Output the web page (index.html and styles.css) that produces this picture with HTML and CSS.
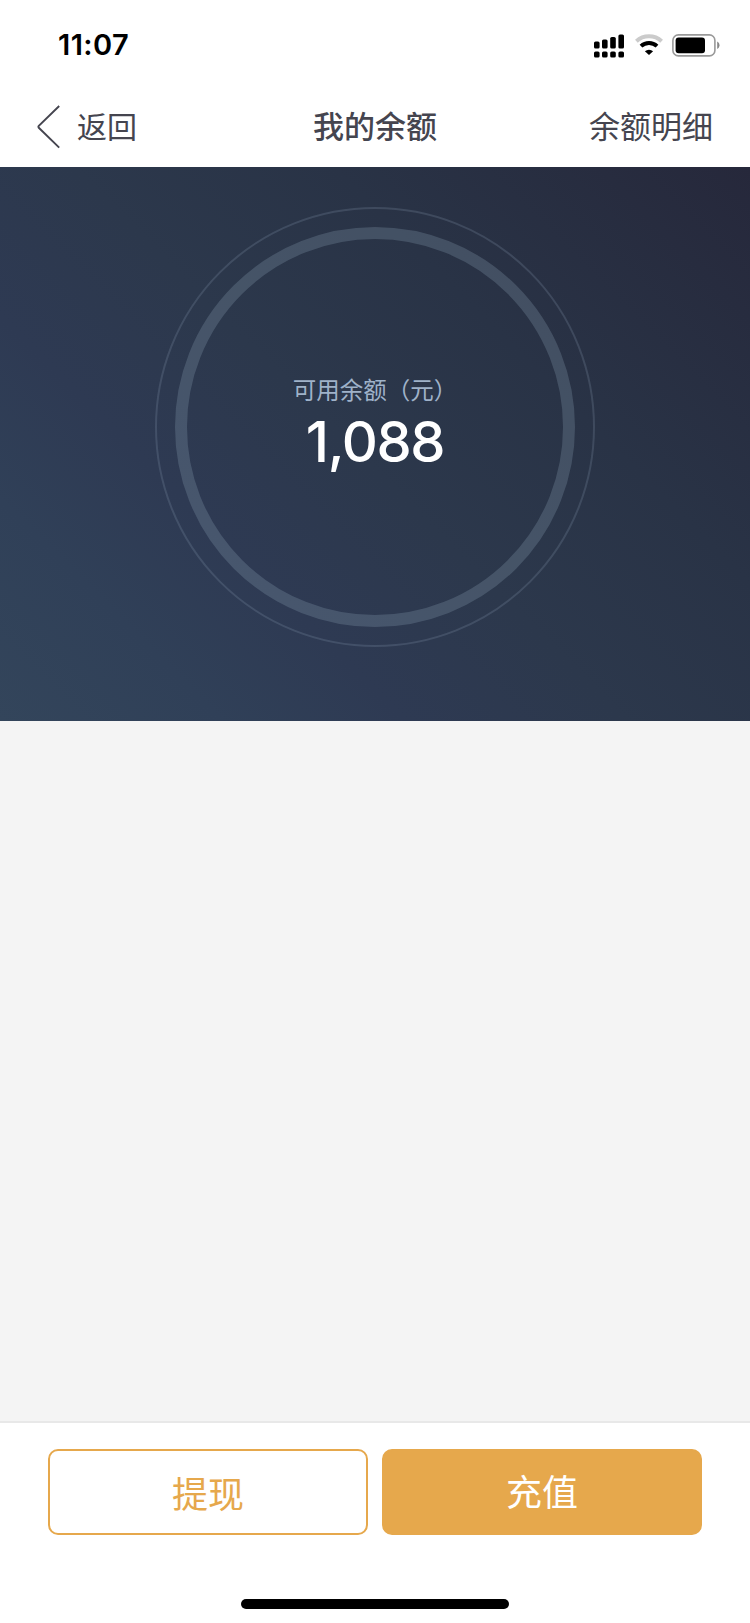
FILE: index.html
```html
<!DOCTYPE html>
<html lang="zh-CN">
<head>
  <meta charset="UTF-8" />
  <meta name="viewport" content="width=device-width, initial-scale=1.0" />
  <title>我的余额</title>
  <link rel="stylesheet" href="styles.css">
</head>
<body>
  <div class="status-bar">
    <span class="time">11:07</span>
    <div class="status-icons">
      <svg class="signal" width="30" height="24" viewBox="0 0 30 24">
        <rect x="0" y="7.5" width="5.6" height="7" rx="1.6" />
        <rect x="8" y="5.5" width="5.6" height="9" rx="1.6" />
        <rect x="16.2" y="3" width="5.6" height="11.5" rx="1.6" />
        <rect x="24.4" y="0.5" width="5.6" height="14" rx="1.6" />
        <rect x="0" y="17.5" width="5.6" height="6" rx="1.6" />
        <rect x="8" y="17.5" width="5.6" height="6" rx="1.6" />
        <rect x="16.2" y="17.5" width="5.6" height="6" rx="1.6" />
        <rect x="24.4" y="17.5" width="5.6" height="6" rx="1.6" />
      </svg>
      <svg class="wifi" width="28" height="22" viewBox="0 0 28 22">
        <path d="M1.4 7.3 A18.5 18.5 0 0 1 26.6 7.3" fill="none" stroke="#cbcbcb" stroke-width="4" />
        <path d="M6 12.1 A11.8 11.8 0 0 1 22 12.1" fill="none" stroke="#000" stroke-width="4" />
        <path d="M14 21 L9.9 17.2 A6.2 6.2 0 0 1 18.1 17.2 Z" />
      </svg>
      <svg class="battery" width="48" height="23" viewBox="0 0 48 23">
        <rect x="0.9" y="0.9" width="42" height="21" rx="5.5" fill="none" stroke="#999" stroke-width="1.6" />
        <rect x="3.6" y="3.5" width="29.4" height="15.8" rx="3" />
        <path d="M45.2 7.5 C48.2 9 48.2 13.5 45.2 15 Z" fill="#888" />
      </svg>
    </div>
  </div>

  <header class="nav">
    <a class="back">
      <svg width="24" height="44" viewBox="0 0 24 44">
        <path d="M22.2 1 L1.8 20.8 Q1 21.8 1.8 22.8 L22.2 42.6" fill="none" stroke="#45454f" stroke-width="1.9" />
      </svg>
      <span>返回</span>
    </a>
    <h1 class="title">我的余额</h1>
    <a class="detail">余额明细</a>
  </header>

  <section class="balance">
    <div class="ring-outer">
      <div class="ring">
        <p class="label">可用余额（元）</p>
        <p class="amount">1,088</p>
      </div>
    </div>
  </section>

  <main class="content"></main>

  <footer class="footer">
    <div class="buttons">
      <button class="btn withdraw">提现</button>
      <button class="btn recharge">充值</button>
    </div>
    <div class="home-bar"></div>
  </footer>
</body>
</html>
```

FILE: styles.css
```css
* {
  box-sizing: border-box;
}
body {
  margin: 0;
  height: 1623px;
  display: flex;
  flex-direction: column;
  font-family: "Liberation Sans", "Noto Sans CJK SC", sans-serif;
  background: #f4f4f4;
  color: #45454f;
}
.status-bar {
  display: flex;
  justify-content: space-between;
  height: 88px;
  padding: 28px 30px 0 58px;
  background: #fff;
}
.time {
  font-family: Inter, sans-serif;
  font-size: 29px;
  font-weight: 600;
  line-height: 34px;
  letter-spacing: 0.4px;
  color: #000;
}
.status-icons {
  display: flex;
  align-items: flex-start;
  padding-top: 5.5px;
}
.wifi {
  margin: 0 9px 0 11px;
}
.nav {
  display: grid;
  grid-template-columns: 1fr auto 1fr;
  align-items: center;
  height: 79px;
  padding: 0 37px 2px 37px;
  background: #fff;
  font-size: 31px;
  line-height: 46px;
}
.back {
  display: flex;
  align-items: center;
  gap: 16px;
  font-size: 30px;
}
.back span,
.title,
.detail {
  padding-top: 2px;
}
.title {
  margin: 0;
  font-size: 31px;
  font-weight: 500;
}
.detail {
  text-align: right;
}
.balance {
  display: flex;
  justify-content: center;
  height: 554px;
  padding-top: 40px;
  background: linear-gradient(225deg, #26283b 0%, #293346 32%, #2c384c 52%, #2e3a53 69%, #304058 83%, #33455b 100%);
}
.ring-outer {
  width: 440px;
  height: 440px;
  padding: 18px;
  border: 2px solid rgba(140, 160, 180, 0.22);
  border-radius: 50%;
}
.ring {
  width: 400px;
  height: 400px;
  padding-top: 134px;
  border: 12px solid rgba(140, 163, 180, 0.27);
  border-radius: 50%;
  text-align: center;
}
.label {
  margin: 0;
  font-size: 23.5px;
  line-height: 36px;
  color: #9fb2c9;
}
.amount {
  margin: 0;
  font-family: Inter, sans-serif;
  font-size: 56px;
  font-weight: 500;
  line-height: 66px;
  letter-spacing: -1.4px;
  color: #fff;
}
.content {
  flex: 1;
}
.footer {
  height: 202px;
  padding: 26px 48px 0;
  border-top: 2px solid #e8e8e8;
  background: #fff;
}
.buttons {
  display: flex;
  gap: 14px;
}
.btn {
  flex: 1;
  height: 86px;
  padding: 0 0 4px;
  border: 2px solid #e6a84c;
  border-radius: 10px;
  font-family: inherit;
  font-size: 36px;
}
.withdraw {
  padding: 0;
  background: #fff;
  color: #e6a84c;
}
.recharge {
  background: #e6a84c;
  color: #fff;
}
.home-bar {
  width: 268px;
  height: 10px;
  margin: 64px auto 0;
  border-radius: 5px;
  background: #000;
}
```
